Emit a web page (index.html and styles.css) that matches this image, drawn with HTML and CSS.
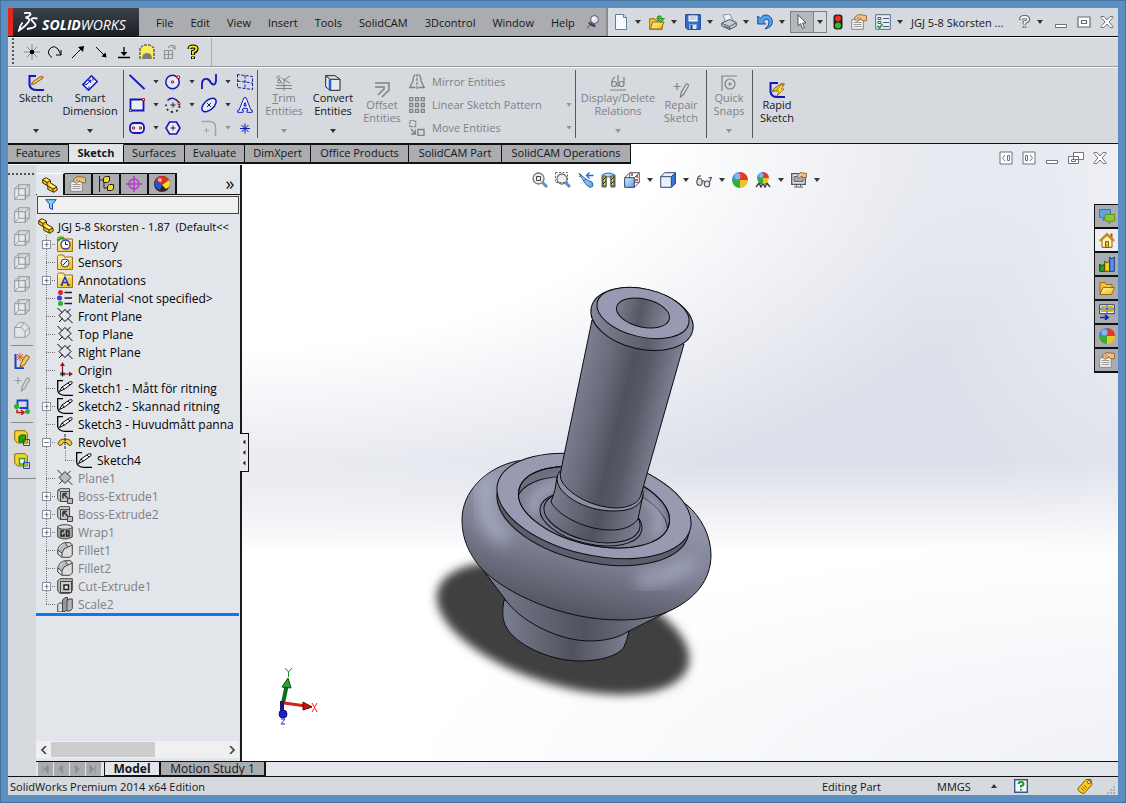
FILE: index.html
```
<!DOCTYPE html>
<html lang="en">
<head>
    <meta charset="UTF-8">
    <meta name="viewport" content="width=device-width, initial-scale=1.0">
    <title>SolidWorks Premium 2014 x64 Edition</title>
    <link rel="stylesheet" href="styles.css">
</head>
<body>
    <!-- Shared icons -->
    <svg class="sprites" aria-hidden="true">
        <linearGradient id="gold" x1="0" y1="0" x2="1" y2="1"><stop offset="0" stop-color="#fff6a0"/><stop offset="1" stop-color="#f0b820"/></linearGradient>
        <linearGradient id="sky" x1="0" y1="0" x2="1" y2="1"><stop offset="0" stop-color="#d8ecff"/><stop offset="1" stop-color="#5f9fe0"/></linearGradient>
        <symbol id="i-part" viewBox="0 0 16 16"><path d="M.7 2.500 4 .7l4.500 2.500V6l6 3.500.8 3.500-3.500 2.300-6-3V9L.7 6z" fill="#f7c71c" stroke="#3d2f00"/><path d="M1 3 5 5.500v3l6 3.500v3M5 5.500l3.500-2M11 12l4-2" fill="none" stroke="#3d2f00"/><path d="m2.500 2.800 2-1.200 2.500 1.600-2 1.200zM6.500 8l2-1 4.500 2.700-2 1.200z" fill="#fff08a"/></symbol>
        <symbol id="i-folder" viewBox="0 0 16 16"><path d="M.5 15.500v-13l1-1.500h5l1 2h8v12.500z" fill="url(#gold)" stroke="#a8700c"/><path d="M1.500 4.500h13" stroke="#fffbd0"/></symbol>
        <symbol id="i-plane" viewBox="0 0 16 16"><path d="M8 1.500 14 7.500 8 13.500 2 7.500zM.5 0 5 4.500M11 10.500l4.500 4.500M13.500 1 10 4.500M5.500 10.500 2 14" fill="none" stroke="currentColor"/></symbol>
        <symbol id="i-sketch" viewBox="0 0 16 16"><path d="M6 .7H.7v9.800Q1.500 15 8 15.300h8" fill="none" stroke="#000" stroke-width="1.300"/><path d="M2.500 11.500 5 7l7.500-5q3.500-1 2.500 1.500L7.500 9zM5 7l2.500 2M11 3l2 2" fill="#fff" stroke="#000"/></symbol>
        <symbol id="i-extrude" viewBox="0 0 16 16"><path d="M.7 2.500 3 .7h9.500v10L10 13.500H3L.7 11z" fill="#d2d2d2" stroke="#444"/><path d="M3.500 3.500h9v10h-9zM3.500 3.500l-2.500-2" fill="#c0c0c0" stroke="#444"/><path d="m6 5.500 5 5m-5-5h4M6 5.500v5" fill="none" stroke="#333" stroke-width="1.500"/><path d="M10.500 10.500h5v5h-5z" fill="#bbb" stroke="#444"/></symbol>
        <symbol id="i-fillet" viewBox="0 0 16 16"><path d="M.7 8Q2 2 8 .7h5l2.300 2V13L13 15.300H5L.7 12z" fill="#ddd" stroke="#444"/><path d="M.7 8 5 11Q6 6 11 5L8 .7M5 11v4.300M11 5l4.300-2" fill="#bbb" stroke="#444"/></symbol>
        <symbol id="i-cube" viewBox="0 0 16 16"><path d="M.7 4.700h10.600v10.600H.7z" fill="#e6e8eb"/><path d="M.7 4.700h10.600v10.600H.7zM4.700.7h10.600v10.600L11.300 15.300V4.700L15.300.7M.7 4.700l4-4v10.600h10.600M4.700 11.300l-4 4" fill="none" stroke="#96999e"/></symbol>
        <symbol id="i-ball" viewBox="0 0 16 16"><path d="M8 8V0a8 8 0 0 1 8 8z" fill="#e03a2e"/><path d="M8 8h8a8 8 0 0 1-8 8z" fill="#ecc52a"/><path d="M8 8v8a8 8 0 0 1-8-8z" fill="#35ad3c"/><path d="M8 8H0a8 8 0 0 1 8-8z" fill="#3f86dc"/><circle cx="5.500" cy="4.500" r="3" fill="#fff" opacity=".4"/></symbol>
        <symbol id="i-hand" viewBox="0 0 16 16"><path d="M.7 5.700h11.600v9.600H.7z" fill="#f3f3f3" stroke="#888"/><path d="M2.500 8.500h8M2.500 10.500h8M2.500 12.500h8" stroke="#999"/><path d="M3 4 7 .8h4l4.500 1v5H12L9.500 5 6 7.500 4.500 6z" fill="#ecc086" stroke="#8a5a22" stroke-width=".8"/><path d="m6 5 2-2m0 3 2-2" stroke="#8a5a22" stroke-width=".7"/></symbol>
        <symbol id="i-min" viewBox="0 0 14 14"><path d="M1.500 9.500h11v3h-11z" fill="#fff" stroke="#70737b"/></symbol>
        <symbol id="i-x" viewBox="0 0 14 14"><path d="M1 1.500h3l3 3.500 3-3.500h3v1L9 7l4 4.500v1h-3L7 9l-3 3.500H1v-1L5 7 1 2.500z" fill="#fff" stroke="#70737b"/></symbol>
        <symbol id="i-pencil" viewBox="0 0 16 16"><path d="M3.500 9.500 4.500 7l8-5.500q3-.8 2.500 1.500L7 8.700z" fill="#f6c64c" stroke="#6b3f08" stroke-width=".8"/><path d="m12 2 2.500 1.700L16 2.500 14.500.6z" fill="#e06a70"/></symbol>
    </svg>

    <div class="app">
        <header class="titlebar">
            <div class="brand">
                <div class="logo">
                    <svg width="22" height="20" viewBox="0 0 22 20" fill="none" stroke="#fff" stroke-width="1.800" aria-hidden="true"><path d="M7 1.200Q14 0 13.500 2.500 12 5 8.500 5.500q5 .8 3.500 3.500-3 5-10 9.500 1-5 3.500-8M20.500 6.500q-7-1-6 1.500l3.500 4q2 3.500-5.500 4.500l-2.500.5" /></svg>
                    <span class="wordmark"><b>SOLID</b>WORKS</span>
                </div>
                <nav class="menu">
                    <a href="#">File</a><a href="#">Edit</a><a href="#">View</a><a href="#">Insert</a><a href="#">Tools</a><a href="#">SolidCAM</a><a href="#">3Dcontrol</a><a href="#">Window</a><a href="#">Help</a>
                </nav>
                <button class="icon-btn" aria-label="Pin menu"><svg width="14" height="14" viewBox="0 0 14 14"><path d="M1 13.500 5.500 8" stroke="#555"/><path d="M2.500 7.500q4 4.500 7 3.500M5 6q0 3.500 4 4" fill="none" stroke="#445" stroke-width="1.500"/><circle cx="8.500" cy="4.500" r="4" fill="#dde" stroke="#556"/><circle cx="7.500" cy="3.500" r="1.500" fill="#fff"/></svg></button>
            </div>
            <div class="quick">
                <button class="icon-btn" aria-label="New"><svg class="i16" viewBox="0 0 16 16"><path d="M2.500.5h8l3 3v12h-11z" fill="#f4faff" stroke="#5f7f9f"/><path d="M10.500.5v3h3" fill="#cfe0f2" stroke="#5f7f9f"/></svg></button><i class="drop"></i>
                <button class="icon-btn" aria-label="Open"><svg class="i16" viewBox="0 0 16 16"><path d="M.7 15.300V4.700h5l1.500 2h6v8.600z" fill="#f3c13e" stroke="#a06a10"/><path d="m1 15 3-7h11l-3 7z" fill="url(#gold)" stroke="#a06a10"/><path d="M8 3q4-3 5 1.500h2.500l-4 4-4-4H10Q10 3 8 3z" fill="#43c43e" stroke="#177a14" stroke-width=".7"/></svg></button><i class="drop"></i>
                <button class="icon-btn" aria-label="Save"><svg class="i16" viewBox="0 0 16 16"><path d="M.7.7h14.600v14.600H2.500L.7 13.500z" fill="#2f6fd0" stroke="#123a80"/><path d="M3.500 1.500h9v6h-9z" fill="#fff"/><path d="M4.500 3h7M4.500 5h7" stroke="#9ab"/><path d="M4.500 10.500h7V15h-7z" fill="#dde6f4"/><path d="M5.500 11h2v4h-2z" fill="#123a80"/></svg></button><i class="drop"></i>
                <button class="icon-btn" aria-label="Print"><svg class="i16" viewBox="0 0 16 16"><path d="m2 1 7-1 3 7-7 2z" fill="#e8f2ff" stroke="#7c92ac"/><path d="m.7 9 8-3.500 6.600 3v3.500l-7 3.500-7.600-3.500z" fill="#c8ccd4" stroke="#555b68"/><path d="m1 9.500 7.500 3L15 9M3 12l7 3M8.500 12.500v3" fill="none" stroke="#555b68"/></svg></button><i class="drop"></i>
                <button class="icon-btn" aria-label="Undo"><svg class="i16" viewBox="0 0 16 16"><path d="M.7 2v8h8L6 7.500Q10 3.500 12 7q1 4-4 8 8-2 7.300-8Q14 .5 7.500 1 5 1.500 3.500 4.500z" fill="#4fa1ea" stroke="#12509c"/></svg></button><i class="drop"></i>
                <span class="select-tool"><button class="icon-btn pressed" aria-label="Select"><svg class="i16" viewBox="0 0 16 16"><path d="M4 .8v11l2.500-2.300 2 5 2-.9-2-4.600H12z" fill="#fff" stroke="#555"/></svg></button><button class="icon-btn arrow" aria-label="Select options"><span class="drop"></span></button></span>
                <button class="icon-btn" aria-label="Rebuild"><svg width="10" height="16" viewBox="0 0 10 16"><rect x=".5" y=".5" width="9" height="15" rx="3" fill="#222"/><circle cx="5" cy="4.500" r="3" fill="#ec2f24"/><circle cx="5" cy="11.500" r="3" fill="#2bc32b"/></svg></button>
                <button class="icon-btn" aria-label="File properties"><svg class="i16"><use href="#i-hand"/></svg></button>
                <button class="icon-btn" aria-label="Options"><svg class="i16" viewBox="0 0 16 16"><path d="M.7.7h14.600v14.600H.7z" fill="#e4eff8" stroke="#4c6f8f"/><path d="M3 3.500h3v2H3zM3 7.500h3v2H3z" fill="#fff" stroke="#557"/><path d="M8 4.500h6M8 8.500h6M8 12.500h6" stroke="#557"/><path d="m2.500 12 2 2 3-4" fill="none" stroke="#1fa71f" stroke-width="1.800"/></svg></button><i class="drop"></i>
                <span class="doc-name">JGJ 5-8 Skorsten ...</span>
                <button class="icon-btn" aria-label="Help"><svg width="12" height="14" viewBox="0 0 12 14" fill="none"><path d="M2 5Q1.500 1.700 5.500 1.700T9.500 4.500Q9 6.500 5.500 7v2.500M5.500 11v2" stroke="#666a72" stroke-width="3.600"/><path d="M2 4.500Q2 1.900 5.500 1.900T9.300 4.500Q9 6.500 5.500 7v2M5.500 11.400v1.200" stroke="#fff" stroke-width="1.600"/></svg></button><i class="drop"></i>
                <span class="window-buttons">
                    <button class="icon-btn" aria-label="Minimize"><svg class="i14"><use href="#i-min"/></svg></button>
                    <button class="icon-btn" aria-label="Maximize"><svg class="i14" viewBox="0 0 14 14"><path d="M1 2h12v10H1z" fill="#fff" stroke="#666a72" stroke-width="1.200"/><path d="M4.500 5.500h5v3h-5z" fill="#fff" stroke="#666a72" stroke-width="1.200"/></svg></button>
                    <button class="icon-btn" aria-label="Close"><svg class="i14"><use href="#i-x"/></svg></button>
                </span>
            </div>
        </header>

        <div class="toolstrip">
            <div class="tools">
                <button class="icon-btn" aria-label="Point"><svg class="i16" viewBox="0 0 16 16"><path d="M8 0v16M0 8h16M3 3l10 10M13 3 3 13" stroke="#777" stroke-width=".8"/><circle cx="8" cy="8" r="2.200"/></svg></button>
                <button class="icon-btn" aria-label="Rotate"><svg class="i16" viewBox="0 0 16 16" fill="none" stroke="#000"><path d="M5 13.500Q0 10 2 6q4-6 9-1l3 6M9 11h5V6"/></svg></button>
                <button class="icon-btn" aria-label="Arrow up"><svg class="i16" viewBox="0 0 16 16"><path d="M2 14 12 4" stroke="#000"/><path d="m8 3 6-1-1 6z"/></svg></button>
                <button class="icon-btn" aria-label="Arrow down"><svg class="i16" viewBox="0 0 16 16"><path d="m3 3 8 8" stroke="#000"/><path d="m13.500 13.500-5-1 4-4z"/></svg></button>
                <button class="icon-btn" aria-label="Normal"><svg class="i16" viewBox="0 0 16 16"><path d="M2 13.500h12M8 3v8" stroke="#000" stroke-width="1.300"/><path d="M4.500 8h7L8 12z"/></svg></button>
                <button class="icon-btn" aria-label="Fixture"><svg class="i16" viewBox="0 0 16 16"><path d="M1 15V4l4-3h6l4 3v11" fill="#f8ef58" stroke="#222" stroke-dasharray="3 1"/><path d="M3 15q0-6 5-6t5 6z" fill="#7c7c7c"/></svg></button>
                <button class="icon-btn" aria-label="Assembly"><svg class="i16" viewBox="0 0 16 16" fill="none" stroke="#909398" stroke-width="1.200"><path d="M2.500 6.500h4v4h-4zM6.500 6.500h4v4h-4zM2.500 10.500h4v4h-4zM6.500 10.500h4v4h-4zM6 4q2-4 7-2v3l-3-2"/></svg></button>
                <button class="icon-btn" aria-label="What's this"><svg class="i16" viewBox="0 0 16 16" fill="none"><path d="M4.500 5Q4.500 2.500 8 2.500T11.500 5Q11 7.500 8 8v3M8 12.500v2.500" stroke="#000" stroke-width="4"/><path d="M4.500 4.800Q4.500 2.600 8 2.600T11.500 5Q11 7 8 8v2.500M8 13v1.500" stroke="#f5e614" stroke-width="2"/></svg></button>
            </div>
        </div>

        <div class="ribbon">
            <button class="tool w48"><svg class="i16" viewBox="0 0 16 16"><path d="M8 1H1.500v9Q2.500 15 9 15h7" fill="none" stroke="#1118b8" stroke-width="2"/><use href="#i-pencil"/></svg><span>Sketch</span><i class="drop"></i></button>
            <button class="tool w60"><svg class="i16" viewBox="0 0 16 16"><path d="m.8 9.500 8.700-8.700 5.700 5.700-8.700 8.700z" fill="#eef" stroke="#1118b8" stroke-width="1.500"/><path d="m4 10 5-5m0 0-3 .5M9 5l-.5 3M11 2.500v3m-9 3.500 3 .5m2 5v-3" fill="none" stroke="#1118b8"/></svg><span>Smart<br>Dimension</span><i class="drop"></i></button>
            <div class="entity-grid">
                <button aria-label="Line"><svg class="i16" viewBox="0 0 16 16"><path d="m.5 1 15 14" stroke="#1118b8" stroke-width="1.800"/></svg></button><i class="drop"></i>
                <button aria-label="Circle"><svg class="i16" viewBox="0 0 16 16"><circle cx="7.500" cy="8" r="6.700" fill="#e6e9f6" stroke="#1118b8" stroke-width="1.500"/><path d="M6.500 7h2v2h-2zM12 2h2.500v2.500H12z" fill="#fff" stroke="#b01818"/></svg></button><i class="drop"></i>
                <button aria-label="Spline"><svg class="i16" viewBox="0 0 16 16"><path d="M1 15V9q1-5 5-4 2 0 4 4 4 4 5-2V0" fill="none" stroke="#1118b8" stroke-width="1.800"/></svg></button><i class="drop"></i>
                <button aria-label="Sketch plane"><svg class="i16" viewBox="0 0 16 16"><path d="M.5.5v13l15 2v-13zM.5 7l15 2M8 1.500v13" fill="none" stroke="#1118b8" stroke-dasharray="3 1.500"/></svg></button>
                <button aria-label="Rectangle"><svg class="i16" viewBox="0 0 16 16"><path d="M1.500 2.500h13v11h-13z" fill="#eceff8" stroke="#1118b8" stroke-width="1.800"/><path d="M.5 12.500h2v2h-2zM13.500 1.500h2v2h-2z" fill="#fff" stroke="#b01818"/></svg></button><i class="drop"></i>
                <button aria-label="Arc"><svg class="i16" viewBox="0 0 16 16"><path d="M2.500 3.500Q8-2 14.500 6" fill="none" stroke="#1118b8" stroke-width="1.500"/><path d="M14.500 8.500q-.5 6-6.500 6.500-6.500 0-7-7.500" fill="none" stroke="#223" stroke-width="1.800" stroke-dasharray="2 3"/><path d="M8 5.500v5M5.500 8h5" stroke="#223"/><path d="M13 5.500h2v2h-2z" fill="#fff" stroke="#b01818"/></svg></button><i class="drop"></i>
                <button aria-label="Ellipse"><svg class="i16" viewBox="0 0 16 16"><ellipse cx="8" cy="8" rx="8.500" ry="4.800" transform="rotate(-42 8 8)" fill="#e6e9f6" stroke="#1118b8" stroke-width="1.500"/><path d="m6 6 4 4m0-4-4 4" stroke="#223"/></svg></button><i class="drop"></i>
                <button aria-label="Text"><svg class="i16" viewBox="0 0 16 16"><path d="m7 .7h2l5 12.600h1.300v2H10v-2h1l-.8-2H6l-.8 2h1v2H.7v-2H2zM6.800 9h2.600L8 5.500z" fill="#f4f5fc" stroke="#1118b8"/></svg></button>
                <button aria-label="Slot"><svg class="i16" viewBox="0 0 16 16"><rect x="1" y="3" width="14" height="10" rx="4" fill="#eceff8" stroke="#1118b8" stroke-width="1.800"/><path d="M3.500 7h2v2h-2zM10.500 7h2v2h-2z" fill="#fff" stroke="#b01818"/></svg></button><i class="drop"></i>
                <button aria-label="Polygon"><svg class="i16" viewBox="0 0 16 16"><path d="M4.500 2h7L15 8l-3.500 6h-7L1 8z" fill="#eceff8" stroke="#1118b8" stroke-width="1.600"/><path d="M8 5.500v5M5.500 8h5" stroke="#223"/></svg></button><span></span>
                <button aria-label="Fillet"><svg class="i16" viewBox="0 0 16 16"><path d="M.5 1.500H9q5.500.5 5.500 6V16" fill="none" stroke="#a0a3a8" stroke-width="1.500"/><path d="M5.500 8v5M3 10.500h5" stroke="#a0a3a8"/></svg></button><i class="drop off"></i>
                <button aria-label="Point"><svg class="i16" viewBox="0 0 16 16"><path d="M8 3.500v10M3 8.500h10M4.500 5l7 7m0-7-7 7" stroke="#1118b8"/></svg></button>
            </div>
            <div class="group">
                <button class="tool w48" disabled><svg class="i16" viewBox="0 0 16 16" fill="none" stroke="currentColor"><path d="M0 10.500h16M0 13.500h16M8 4v12M6 9 3 4M8 5l6-4M8 5l6 3M6 3l3 2"/><circle cx="2.500" cy="2.500" r="1.500"/><circle cx="3" cy="6.500" r="1.500"/></svg><span><u>T</u>rim<br>Entities</span><i class="drop"></i></button>
                <button class="tool w48"><svg class="i16" viewBox="0 0 16 16"><path d="M.7.700H10l5 3.600v11H5l-4.300-3.500zM.7.700 5 4.300h10" fill="#e6e9ee" stroke="#222"/><path d="M5 4.300v11" stroke="#1f62d8" stroke-width="2.500"/></svg><span>Convert<br>Entities</span><i class="drop"></i></button>
                <button class="tool low w48" disabled><svg class="i16" viewBox="0 0 16 16" fill="none" stroke="currentColor" stroke-width="1.500"><path d="M1 1h14v7l-7 7M1 5h9v2l-6 6"/></svg><span>Offset<br>Entities</span></button>
                <div class="stack">
                    <button class="line" disabled><svg class="i16" viewBox="0 0 16 16" fill="none" stroke="currentColor" stroke-width="1.300"><path d="M8 0v16" stroke-dasharray="3 1"/><path d="M6.500.7Q4 2 4 7L.7 13.500h5.800M9.500.7Q12 2 12 7l3.300 6.500H9.500"/></svg><span>Mirror Entities</span></button>
                    <button class="line" disabled><svg class="i16" viewBox="0 0 16 16" fill="none" stroke="currentColor" stroke-width="1.300"><path d="M.7.7h3v3h-3zM6.500.7h3v3h-3zM12.300.7h3v3h-3zM.7 6.500h3v3h-3zM6.500 6.500h3v3h-3zM12.300 6.500h3v3h-3zM.7 12.300h3v3h-3zM6.500 12.300h3v3h-3zM12.300 12.300h3v3h-3z"/></svg><span>Linear Sketch Pattern</span><i class="drop"></i></button>
                    <button class="line" disabled><svg class="i16" viewBox="0 0 16 16" fill="none" stroke="currentColor" stroke-width="1.300"><path d="M.7.7h6v6h-6z" stroke-dasharray="2 1"/><path d="M9 9.500h6v6H9zM2 9l4 4.500M2 14h4.500V9.500"/></svg><span>Move Entities</span><i class="drop"></i></button>
                </div>
            </div>
            <div class="group">
                <button class="tool w80" disabled><svg class="i16" viewBox="0 0 16 16" fill="none" stroke="currentColor" stroke-width="1.200"><circle cx="4" cy="9" r="2.500"/><circle cx="11.500" cy="9" r="2.500"/><path d="M1.500 9Q2 4 5 2M14 8V2M8 0v12M0 15h16"/></svg><span>Display/Delete<br>Relations</span><i class="drop"></i></button>
                <button class="tool low w44" disabled><svg class="i16" viewBox="0 0 16 16" fill="none" stroke="currentColor" stroke-width="1.200"><path d="M4 1v7M.5 4.500h7M7.500 15l.5-4 5-9q2.500-.5 2.500 2l-5 8.500z"/></svg><span>Repair<br>Sketch</span></button>
            </div>
            <div class="group">
                <button class="tool w40" disabled><svg class="i16" viewBox="0 0 16 16" fill="none" stroke="currentColor" stroke-width="1.200"><path d="M1 16V1h15"/><circle cx="9" cy="9" r="5"/><circle cx="9" cy="9" r="1"/></svg><span>Quick<br>Snaps</span><i class="drop"></i></button>
            </div>
            <div class="group">
                <button class="tool low w44"><svg class="i16" viewBox="0 0 16 16"><path d="M9 1H1.500v9Q2.500 15 8 15h8" fill="none" stroke="#1118b8" stroke-width="2"/><use href="#i-pencil"/><path d="M12 3 7 9h3l-2 5 7-7h-3l3-4z" fill="#ffe02e" stroke="#8a5a00" stroke-width=".7"/></svg><span>Rapid<br>Sketch</span></button>
            </div>
        </div>

        <div class="workspace">
            <div class="tab-row">
                <div class="command-tabs" role="tablist">
                    <button role="tab">Features</button><button role="tab" class="active">Sketch</button><button role="tab">Surfaces</button><button role="tab">Evaluate</button><button role="tab">DimXpert</button><button role="tab">Office Products</button><button role="tab">SolidCAM Part</button><button role="tab">SolidCAM Operations</button>
                </div>
                <div class="doc-buttons">
                    <button class="icon-btn" aria-label="Collapse left"><svg class="i14" viewBox="0 0 14 14"><path d="M1 1h12v12H1z" fill="#fff" stroke="#70737b"/><path d="M6 4 3.500 7 6 10M8.500 4.500h2v5h-2z" fill="none" stroke="#70737b"/></svg></button>
                    <button class="icon-btn" aria-label="Collapse right"><svg class="i14" viewBox="0 0 14 14"><path d="M1 1h12v12H1z" fill="#fff" stroke="#70737b"/><path d="m8 4 2.500 3L8 10M3.500 4.500h2v5h-2z" fill="none" stroke="#70737b"/></svg></button>
                    <button class="icon-btn" aria-label="Minimize document"><svg class="i14"><use href="#i-min"/></svg></button>
                    <button class="icon-btn" aria-label="Restore document"><svg width="16" height="14" viewBox="0 0 16 14"><path d="M5.500 1.500h10v7h-10zM.5 5.500h10v7H.5zM3.500 8.500h4v2h-4z" fill="#fff" stroke="#70737b"/></svg></button>
                    <button class="icon-btn" aria-label="Close document"><svg class="i14"><use href="#i-x"/></svg></button>
                </div>
            </div>

            <div class="work-body">
                <aside class="view-bar">
                    <button class="icon-btn" aria-label="Front"><svg class="i16"><use href="#i-cube"/></svg></button>
                    <button class="icon-btn" aria-label="Back"><svg class="i16"><use href="#i-cube"/></svg></button>
                    <button class="icon-btn" aria-label="Left"><svg class="i16"><use href="#i-cube"/></svg></button>
                    <button class="icon-btn" aria-label="Right"><svg class="i16"><use href="#i-cube"/></svg></button>
                    <button class="icon-btn" aria-label="Top"><svg class="i16"><use href="#i-cube"/></svg></button>
                    <button class="icon-btn" aria-label="Bottom"><svg class="i16"><use href="#i-cube"/></svg></button>
                    <button class="icon-btn" aria-label="Isometric"><svg class="i16" viewBox="0 0 16 16" fill="#e2e4e8" stroke="#96999e"><path d="M.7 5.500 5 .7h5l5.300 5v6l-4 3.600H.7zM.7 5.500H7l4 4v5.800M7 5.500l3-4.800m1 8.800 4.300-3.800"/></svg></button>
                    <hr>
                    <button class="icon-btn" aria-label="New sketch"><svg class="i16" viewBox="0 0 16 16"><path d="M1.500 1v14.300H10" fill="none" stroke="#1540c8" stroke-width="2"/><path d="M6 0v8M2 4h8M3 1l6 6m0-6L3 7" stroke="#e8581c"/><path d="m6 14 1-4 5-8 3.500 2-5 8z" fill="#f6c64c" stroke="#6b3f08" stroke-width=".8"/></svg></button>
                    <button class="icon-btn" aria-label="Edit sketch"><svg class="i16" viewBox="0 0 16 16" fill="none" stroke="#9a9da3" stroke-width="1.200"><path d="M4 1v7M.5 4.500h7M7.500 15l.5-4 5-9q2.500-.5 2.500 2l-5 8.500z"/></svg></button>
                    <button class="icon-btn" aria-label="Relations"><svg class="i16" viewBox="0 0 16 16"><path d="M3.500 7V1.500h10V9h-8" fill="none" stroke="#1540c8" stroke-width="1.800"/><circle cx="2.500" cy="7.500" r="2.500" fill="#28b428"/><circle cx="13.500" cy="12.500" r="2.500" fill="#28b428"/><path d="M3 10.500v3h6M7 11l3 2.500L7 16" fill="none" stroke="#c01818" stroke-width="1.500"/></svg></button>
                    <hr>
                    <button class="icon-btn" aria-label="Extrude boss"><svg class="i16" viewBox="0 0 16 16"><path d="M.7 1 3 .7h8L13.300 3v10H3.500L.7 10z" fill="#f6d332" stroke="#8a6a00"/><path d="M5 6.500 7 5h4.500v5L10 12H5z" fill="#28a428" stroke="#085a08"/><path d="M9.500 9.500h6v6h-6z" fill="none" stroke="#2448c0"/></svg></button>
                    <button class="icon-btn" aria-label="Extrude cut"><svg class="i16" viewBox="0 0 16 16"><path d="M.7 1 3 .7h8L13.300 3v10H3.500L.7 10z" fill="#f6d332" stroke="#8a6a00"/><path d="M5.500 5.500h5v5.500h-5z" fill="#fff" stroke="#28a428" stroke-width="1.500"/><path d="M9.500 9.500h6v6h-6z" fill="none" stroke="#2448c0"/></svg></button>
                    <hr class="full">
                </aside>

                <div class="document">
                    <div class="upper">
                        <aside class="feature-panel">
                            <div class="panel-tabs">
                                <button class="active" aria-label="Feature tree"><svg class="i16"><use href="#i-part"/></svg></button>
                                <button aria-label="Properties"><svg class="i16"><use href="#i-hand"/></svg></button>
                                <button aria-label="Configurations"><svg class="i16" viewBox="0 0 16 16"><path d="M1.500 0v16M1.500 4H6M6 4v8h3" fill="none" stroke="#222"/><path d="m5.500 2 2-1.500h4V5L9.500 6.500h-4zM9.500 10l2-1.500h4V13l-2 1.500h-4z" fill="#f7d52e" stroke="#222"/></svg></button>
                                <button aria-label="Dimensions"><svg class="i16" viewBox="0 0 16 16" fill="none" stroke="#b838d0" stroke-width="1.500"><circle cx="8" cy="8" r="5"/><path d="M8 0v16M0 8h16"/></svg></button>
                                <button aria-label="Display manager"><svg class="i16" viewBox="0 0 16 16"><circle cx="8" cy="8" r="8" fill="#282828"/><path d="M8 0a8 8 0 0 1 7 4L8 9 1.500 4Q4 0 8 0z" fill="#e22e22"/><path d="m8 9 7-5q2 4 0 7l-3 2z" fill="#f0dc30"/><path d="M1.500 4 8 9l-2 5Q-1 11 1.500 4z" fill="#2c50d8"/><circle cx="6" cy="4" r="2" fill="#fff" opacity=".6"/></svg></button>
                                <button class="more" aria-label="More">»</button>
                            </div>
                            <label class="filter"><svg width="12" height="12" viewBox="0 0 12 12"><path d="M.7.7h10.600L7.500 5v5.500L4.500 9V5z" fill="#7fd0f8" stroke="#1548b8"/></svg><input type="text" aria-label="Filter"></label>

                            <div class="tree">
                                <div class="node root"><svg class="i16"><use href="#i-part"/></svg><span>JGJ 5-8 Skorsten - 1.87&nbsp; (Default&lt;&lt;</span></div>
                                <ul>
                                    <li class="node"><span class="twig"><button aria-label="Expand">+</button></span><svg class="i16" viewBox="0 0 16 16"><use href="#i-folder"/><circle cx="8.500" cy="8.500" r="4.500" fill="#fff" stroke="#2442a0" stroke-width="1.300"/><path d="M8.500 5.500v3H11" fill="none" stroke="#222"/><path d="M1 5Q3 1 7 3" fill="none" stroke="#1ea01e" stroke-width="2"/></svg><span>History</span></li>
                                    <li class="node"><span class="twig"></span><svg class="i16" viewBox="0 0 16 16"><use href="#i-folder"/><circle cx="8" cy="9" r="4" fill="#eef" stroke="#444"/><path d="m6 11 4-4" stroke="#222"/></svg><span>Sensors</span></li>
                                    <li class="node"><span class="twig"><button aria-label="Expand">+</button></span><svg class="i16" viewBox="0 0 16 16"><use href="#i-folder"/><path d="M4.500 13 8 5l3.500 8M5.500 10.500h5M3.500 13h2.500M10 13h3" fill="none" stroke="#1c38b8" stroke-width="1.500"/></svg><span>Annotations</span></li>
                                    <li class="node"><span class="twig"></span><svg class="i16" viewBox="0 0 16 16"><circle cx="3.500" cy="2.500" r="2.500" fill="#e02424"/><circle cx="2.500" cy="8" r="2.500" fill="#2c40e0"/><circle cx="3.500" cy="13.500" r="2.500" fill="#20b828"/><path d="M7.500 2.500H15M7.500 8H15M7.500 13.500H15" stroke="#222" stroke-width="1.500"/></svg><span>Material &lt;not specified&gt;</span></li>
                                    <li class="node"><span class="twig"></span><svg class="i16"><use href="#i-plane"/></svg><span>Front Plane</span></li>
                                    <li class="node"><span class="twig"></span><svg class="i16"><use href="#i-plane"/></svg><span>Top Plane</span></li>
                                    <li class="node"><span class="twig"></span><svg class="i16"><use href="#i-plane"/></svg><span>Right Plane</span></li>
                                    <li class="node"><span class="twig"></span><svg class="i16" viewBox="0 0 16 16"><path d="M5.500 12V3M7 12h6" stroke="#a01010" stroke-width="1.200"/><path d="M5.500 0 8 4H3zM16 12l-4-2.500v5z" fill="#a01010"/><path d="M5.500 9.500v5M3 12h5M4 10.500l3 3m0-3-3 3" stroke="#000"/></svg><span>Origin</span></li>
                                    <li class="node"><span class="twig"></span><svg class="i16"><use href="#i-sketch"/></svg><span>Sketch1 - Mått för ritning</span></li>
                                    <li class="node"><span class="twig"><button aria-label="Expand">+</button></span><svg class="i16"><use href="#i-sketch"/></svg><span>Sketch2 - Skannad ritning</span></li>
                                    <li class="node"><span class="twig"></span><svg class="i16"><use href="#i-sketch"/></svg><span>Sketch3 - Huvudmått panna</span></li>
                                    <li class="node"><span class="twig"><button aria-label="Collapse">−</button></span><svg class="i16" viewBox="0 0 16 16"><path d="M1 9.500Q2 5 8 5t7 4.500q-1 3-3.500 1.500Q10 8 8 8T4.500 11Q2 12.500 1 9.500z" fill="#f6c92a" stroke="#5a4200"/><path d="M8 0v16" stroke="#222" stroke-dasharray="3 1"/></svg><span>Revolve1</span></li>
                                    <li class="node"><span class="twig pass"></span><span class="twig end"></span><svg class="i16"><use href="#i-sketch"/></svg><span>Sketch4</span></li>
                                    <li class="node off"><span class="twig"></span><svg class="i16 dark"><path d="m8 1.500 6 6-6 6-6-6z" fill="#bbb"/><use href="#i-plane"/></svg><span>Plane1</span></li>
                                    <li class="node off"><span class="twig"><button aria-label="Expand">+</button></span><svg class="i16"><use href="#i-extrude"/></svg><span>Boss-Extrude1</span></li>
                                    <li class="node off"><span class="twig"><button aria-label="Expand">+</button></span><svg class="i16"><use href="#i-extrude"/></svg><span>Boss-Extrude2</span></li>
                                    <li class="node off"><span class="twig"><button aria-label="Expand">+</button></span><svg class="i16" viewBox="0 0 16 16"><path d="M.7 3v10q7 4 14.600 0V3" fill="#aaa" stroke="#444"/><ellipse cx="8" cy="3" rx="7.300" ry="2.300" fill="#ddd" stroke="#444"/><path d="M7 7H4v5h3V9.500M9.500 7H12v5H9.500z" fill="none" stroke="#222" stroke-width="1.400"/></svg><span>Wrap1</span></li>
                                    <li class="node off"><span class="twig"></span><svg class="i16"><use href="#i-fillet"/></svg><span>Fillet1</span></li>
                                    <li class="node off"><span class="twig"></span><svg class="i16"><use href="#i-fillet"/></svg><span>Fillet2</span></li>
                                    <li class="node off"><span class="twig"><button aria-label="Expand">+</button></span><svg class="i16" viewBox="0 0 16 16"><path d="M.7 3 3 .7h12.300v12L13 15.300H3L.7 13z" fill="#bbb" stroke="#444"/><path d="M3.500 3.500h11v11h-11z" fill="#ccc" stroke="#444"/><path d="M7 7h4.500v4.500H7z" fill="#eee" stroke="#222" stroke-width="1.500"/></svg><span>Cut-Extrude1</span></li>
                                    <li class="node off"><span class="twig end"></span><svg class="i16" viewBox="0 0 16 16"><path d="M.7 8.500 2.500 7H6v7.500L4.500 16H.7z" fill="#ddd" stroke="#444"/><path d="M5.500 4 8 1.500h2.500v12L8 15.500H5.500z" fill="#999" stroke="#444"/><path d="M10 5.500 12 3h3.300v9.500L13 15h-3z" fill="#b5b5b5" stroke="#444"/></svg><span>Scale2</span></li>
                                </ul>
                                <div class="rollback"></div>
                            </div>

                            <div class="scrollbar">
                                <button aria-label="Scroll left"><svg width="8" height="8" viewBox="0 0 8 8"><path d="M6 0 2 4l4 4" fill="none" stroke="#444" stroke-width="1.700"/></svg></button>
                                <div class="track"><div class="thumb"></div></div>
                                <button aria-label="Scroll right"><svg width="8" height="8" viewBox="0 0 8 8"><path d="m2 0 4 4-4 4" fill="none" stroke="#444" stroke-width="1.700"/></svg></button>
                            </div>
                        </aside>

                        <main class="viewport">
                            <svg class="model" viewBox="242 165 876 596" role="img" aria-label="JGJ 5-8 Skorsten">
                                <defs>
                                    <filter id="soft" x="-20%" y="-20%" width="140%" height="140%"><feGaussianBlur stdDeviation="5"/></filter>
                                    <filter id="haze" x="-50%" y="-50%" width="200%" height="200%"><feGaussianBlur stdDeviation="8"/></filter>
                                    <linearGradient id="tube" gradientUnits="userSpaceOnUse" x1="575" y1="398" x2="664" y2="420"><stop offset="0" stop-color="#7b7e90"/><stop offset=".25" stop-color="#6a6c7c"/><stop offset=".52" stop-color="#50525d"/><stop offset=".68" stop-color="#565864"/><stop offset="1" stop-color="#7d8093"/></linearGradient>
                                    <linearGradient id="collar" gradientUnits="userSpaceOnUse" x1="550" y1="505" x2="640" y2="525"><stop offset="0" stop-color="#7b7e90"/><stop offset=".55" stop-color="#50525d"/><stop offset="1" stop-color="#7d8093"/></linearGradient>
                                    <linearGradient id="bore" x1="0" y1="0" x2="1" y2="0"><stop offset="0" stop-color="#7a7d8f"/><stop offset=".45" stop-color="#565864"/><stop offset="1" stop-color="#858899"/></linearGradient>
                                    <linearGradient id="lip" x1="0" y1="0" x2="1" y2="0"><stop offset="0" stop-color="#85889b"/><stop offset=".6" stop-color="#5b5d6a"/><stop offset="1" stop-color="#9194aa"/></linearGradient>
                                    <linearGradient id="torus" gradientUnits="userSpaceOnUse" x1="595" y1="500" x2="568" y2="618"><stop offset="0" stop-color="#9396ab"/><stop offset=".45" stop-color="#7e8194"/><stop offset="1" stop-color="#50525d"/></linearGradient>
                                    <linearGradient id="foot" x1="0" y1="0" x2="1" y2="0"><stop offset="0" stop-color="#7b7e90"/><stop offset=".55" stop-color="#50525d"/><stop offset="1" stop-color="#7d8093"/></linearGradient>
                                    <clipPath id="torus-clip"><path d="M517 461C485 468 462 492 462 520c0 20 8 36 21 50 22 22 77 50 137 50 20 0 35-3 47-8 28-12 44-32 44-57 0-20-11-39-24-50L600 455z"/></clipPath>
                                    <clipPath id="well"><ellipse cx="594" cy="507" rx="77" ry="38" transform="rotate(13 594 507)"/></clipPath>
                                </defs>
                                <ellipse cx="563" cy="628" rx="131" ry="57" transform="rotate(17 563 628)" fill="#404040" filter="url(#soft)"/>
                                <g stroke="#0c0c10" stroke-linejoin="round">
                                    <path d="M504 600q-4 20 4 30c12 17 44 31 72 31 20 0 38-5 44-14q3-7 5-16z" fill="url(#foot)"/>
                                    <path d="m483 570 25 33c16 20 52 38 82 38 16 0 30-4 37-9l40-20z" fill="url(#foot)"/>
                                    <path d="M517 461C485 468 462 492 462 520c0 20 8 36 21 50 22 22 77 50 137 50 20 0 35-3 47-8 28-12 44-32 44-57 0-20-11-39-24-50L600 455z" fill="url(#torus)"/>
                                </g>
                                <g clip-path="url(#torus-clip)">
                                    <path d="M488 478q-12 42 20 62" fill="none" stroke="#b4b8d0" stroke-width="14" opacity=".8" filter="url(#haze)"/>
                                    <path d="M637 581q36-3 55-20" fill="none" stroke="#b4b8d0" stroke-width="13" opacity=".75" filter="url(#haze)"/>
                                    <path d="M462 510q0 45 35 67" fill="none" stroke="#5f6170" stroke-width="7" opacity=".6" filter="url(#haze)"/>
                                </g>
                                <g stroke="#0c0c10" stroke-linejoin="round">
                                    <ellipse cx="593" cy="513" rx="98" ry="49" transform="rotate(13 593 513)" fill="#5c5e6b"/>
                                    <ellipse cx="594" cy="506" rx="99" ry="49" transform="rotate(13 594 506)" fill="#979ab0"/>
                                    <ellipse cx="594" cy="507" rx="77" ry="38" transform="rotate(13 594 507)" fill="#6c6f80"/>
                                    <g clip-path="url(#well)">
                                        <ellipse cx="592" cy="517" rx="77" ry="38" transform="rotate(13 592 517)" fill="#7f8295"/>
                                        <path d="M535 515q-8-25 30-32M645 492q22 20 10 45" fill="none" stroke="#a4a8bf" stroke-width="12" opacity=".7" filter="url(#soft)"/>
                                        <ellipse cx="591" cy="519" rx="52" ry="25" transform="rotate(13 591 519)" fill="#7a7d90"/>
                                        <ellipse cx="592" cy="517" rx="49" ry="24" transform="rotate(13 592 517)" fill="url(#collar)"/>
                                    </g>
                                    <ellipse cx="594" cy="507" rx="77" ry="38" transform="rotate(13 594 507)" fill="none"/>
                                    <path d="M557 477q-1 13-6 25c8 15 36 28 60 28 12 0 21-3 27-11l5-24z" fill="url(#collar)"/>
                                    <path d="M560 471q-6 8 0 17c10 14 32 23 54 23 18 0 30-6 29-20z" fill="#8c8fa3"/>
                                    <path d="m592 320-31 150q-3 10 6 18c12 12 30 19 48 20 14 0 24-5 26-13l43-151z" fill="url(#tube)"/>
                                    <ellipse cx="642" cy="319" rx="52" ry="30" transform="rotate(13 642 319)" fill="url(#lip)"/>
                                    <ellipse cx="643" cy="313" rx="47" ry="24" transform="rotate(13 643 313)" fill="#979ab0"/>
                                    <ellipse cx="643" cy="313" rx="27" ry="14" transform="rotate(13 643 313)" fill="url(#bore)"/>
                                </g>
                                <!-- Axis triad -->
                                <path d="m283 703 4-19" stroke="#14681c" stroke-width="4"/><path d="m282 687 6-9 3 10z" fill="#28a838" stroke="#0d4a12"/>
                                <path d="m284 703 22 3" stroke="#d02020" stroke-width="3"/><path d="m303 702 9 5-9 3z" fill="#c01818" stroke="#700"/>
                                <path d="M282 701v10" stroke="#181878" stroke-width="4"/><circle cx="283" cy="714" r="4" fill="#2020c8" stroke="#101070"/>
                                <path d="m285 668 3.500 4v5m0-5 3.500-4" fill="none" stroke="#18901c"/><path d="m312 703 5 9m0-9-5 9" stroke="#f02020"/><path d="M281 719h4l-4 5h4" fill="none" stroke="#2020f0"/>
                            </svg>
                            <button class="splitter" aria-label="Collapse panel"><i></i><i></i><i></i></button>
                            <div class="hud">
                                <button class="icon-btn" aria-label="Zoom to fit"><svg class="i16" viewBox="0 0 16 16"><circle cx="6.500" cy="6.500" r="5.500" fill="#eee" stroke="#777" stroke-width="1.300"/><path d="M4.500 4.500h4v4h-4z" fill="none" stroke="#444"/><path d="m10.500 10.500 4.500 4.500" stroke="#5b8fd0" stroke-width="3"/></svg></button>
                                <button class="icon-btn" aria-label="Zoom to area"><svg class="i16" viewBox="0 0 16 16"><circle cx="7" cy="7" r="5" fill="#eee" stroke="#777" stroke-width="1.300"/><path d="M.5.5h12v10H.5z" fill="none" stroke="#666" stroke-dasharray="2 1.500"/><path d="m10.500 10.500 4.500 4.500" stroke="#5b8fd0" stroke-width="3"/></svg></button>
                                <button class="icon-btn" aria-label="Previous view"><svg class="i16" viewBox="0 0 16 16"><path d="M1 1.500 9 8l5 2 1 4-3 1.500-4-3z" fill="url(#sky)" stroke="#1d69a8"/><path d="m1 5 3-2M5 9l4-2" stroke="#1d69a8"/><path d="M15.500 3.500h-7m3-3-3 3 3 3" fill="none" stroke="#1d69d8" stroke-width="1.300"/></svg></button>
                                <button class="icon-btn" aria-label="Section view"><svg class="i16" viewBox="0 0 16 16"><path d="M1 3q6-4 13 0v12h-4V5H5v10H1z" fill="url(#sky)" stroke="#2d62a8"/><path d="M2 4h3v10H2zM10 4h3v10h-3z" fill="#f6d332" stroke="#554400"/><path d="m2 8 3-3m-3 7 3-3m5-1 3-3m-3 7 3-3" stroke="#222"/></svg></button>
                                <button class="icon-btn" aria-label="View orientation"><svg class="i16" viewBox="0 0 16 16"><path d="M.7 5.700h9.600v9.600H.7z" fill="url(#sky)" stroke="#246"/><path d="M.7 5.700l5-5h9.600v9.600l-5 5M10.300 5.700l5-5M5.700.7v5m4.600 4.600h5" fill="none" stroke="#555"/><path d="M8 1v3m3 4h3m-1-5v3" stroke="#e02020" stroke-width="1.500"/></svg></button><i class="drop"></i>
                                <button class="icon-btn" aria-label="Display style"><svg class="i16" viewBox="0 0 16 16"><path d="m.7 4.700 4-4h10.600v10.600l-4 4H.7z" fill="#e6f1fc" stroke="#346"/><path d="M11.300 4.700l4-4v10.600l-4 4z" fill="#3c78d8" stroke="#346"/><path d="M.7 4.700h10.600" stroke="#346"/></svg></button><i class="drop"></i>
                                <button class="icon-btn" aria-label="Hide/Show items"><svg class="i16" viewBox="0 0 16 16" fill="#dce9f6" stroke="#555" stroke-width="1.200"><ellipse cx="3.500" cy="10" rx="2.700" ry="3.500"/><ellipse cx="11" cy="12" rx="2.700" ry="3"/><path d="M1.500 7Q2 3.500 5 4M6 9.500q2-1.500 3 1M13.500 10l2-4.500-3 .5" fill="none"/></svg></button><i class="drop"></i>
                                <button class="icon-btn" aria-label="Edit appearance"><svg class="i16"><use href="#i-ball"/></svg></button>
                                <button class="icon-btn" aria-label="Apply scene"><svg class="i16" viewBox="0 0 16 16"><path d="m1 15 3-4h8l3 4M4 11l2 4 2-4 2 4 2-4" fill="none" stroke="#444" stroke-width="1.500"/><use href="#i-ball" x="2" width="12" height="12"/></svg></button><i class="drop"></i>
                                <button class="icon-btn" aria-label="View settings"><svg class="i16" viewBox="0 0 16 16"><path d="M.7 1.700h13.600v10.600H.7z" fill="#e2e4e8" stroke="#555" stroke-width="1.300"/><path d="M3 4.500h9v5H3z" fill="#aab" stroke="#666"/><path d="M5.500 12.500v2m4-2v2M3 15h9" stroke="#555"/><path d="m6 4 3-3.500 6.500 1v4H12L10.500 4 8 6.500z" fill="#ecc086" stroke="#8a5a22" stroke-width=".8"/></svg></button><i class="drop"></i>
                            </div>
                            <nav class="task-pane">
                                <button aria-label="Forum"><svg class="i16" viewBox="0 0 16 16"><path d="M.5 1.500h11v8H6l-2 3v-3H.5z" fill="#56a8e8" stroke="#2c78bc"/><path d="M6 6.500h9.500V13H12l-2 2.500V13H6z" fill="#90c82c" stroke="#5f921a"/></svg></button>
                                <button class="active" aria-label="Resources"><svg class="i16" viewBox="0 0 16 16"><path d="M11.500 1.500h2V7h-2z" fill="#c33a20"/><path d="M3 8v7.300h10V8L8 3.500z" fill="#fff3b8" stroke="#8a5a10"/><path d="m.7 9 7.300-7 7.300 7" fill="none" stroke="#c88c10" stroke-width="2"/><path d="M6.500 9.500h3v6h-3z" fill="#f2b820" stroke="#8a5a10"/></svg></button>
                                <button aria-label="Design library"><svg class="i16" viewBox="0 0 16 16"><path d="m.7 8 2 2 3-2v7.300h-5z" fill="#22a428" stroke="#0a480c"/><path d="m5.700 5 2 2 3-2v10.300h-5z" fill="#f4cf2a" stroke="#5a4800"/><path d="m10.700 1 2 2 2.600-2v14.300h-4.600z" fill="#5a92e4" stroke="#163a80"/></svg></button>
                                <button aria-label="File explorer"><svg class="i16" viewBox="0 0 16 16"><path d="M1 14.500V2.500h5l1.500 2H13v3" fill="#f3c13e" stroke="#a06a10"/><path d="m1 14.500 3-7h11.500l-3 7z" fill="url(#gold)" stroke="#a06a10"/></svg></button>
                                <button aria-label="View palette"><svg class="i16" viewBox="0 0 16 16"><path d="M.7.7h14.600v9H.7z" fill="#fff" stroke="#223a78"/><path d="M2 3h5M9 3h5M2 7h5M9 7h5" stroke="#d8b400" stroke-width="2"/><path d="M8 1v8M1 5h14" stroke="#223a78"/><path d="M1 13.500h8m-3-2.500 3 2.500L6 16" fill="none" stroke="#1818d0" stroke-width="1.700"/></svg></button>
                                <button aria-label="Appearances"><svg class="i16"><use href="#i-ball"/></svg></button>
                                <button aria-label="Custom properties"><svg class="i16"><use href="#i-hand"/></svg></button>
                            </nav>
                        </main>
                    </div>

                    <footer class="model-tabs">
                        <div class="pager"><button aria-label="First"><svg viewBox="0 0 10 10"><path d="M2 0v10M9 0 4 5l5 5z"/></svg></button><button aria-label="Previous"><svg viewBox="0 0 10 10"><path d="M7 0 2 5l5 5z"/></svg></button><button aria-label="Next"><svg viewBox="0 0 10 10"><path d="m3 0 5 5-5 5z"/></svg></button><button aria-label="Last"><svg viewBox="0 0 10 10"><path d="M8 0v10M1 0l5 5-5 5z"/></svg></button></div>
                        <button class="sheet active">Model</button><button class="sheet">Motion Study 1</button>
                    </footer>
                </div>
            </div>
        </div>

        <div class="statusbar">
            <span class="edition">SolidWorks Premium 2014 x64 Edition</span>
            <span class="mode">Editing Part</span>
            <span class="units">MMGS</span>
            <i class="drop up"></i>
            <button class="icon-btn" aria-label="Quick tips"><svg width="14" height="14" viewBox="0 0 14 14"><path d="M.7.7h12.600v12.600H.7z" fill="#f6fbff" stroke="#335a88" stroke-width="1.400"/><path d="M4.500 5Q4.500 3 7 3t2.500 2Q9.500 6.500 7 7v1.500M7 10v1.500" fill="none" stroke="#1c9c24" stroke-width="2"/></svg></button>
            <button class="icon-btn tag" aria-label="Tags"><svg class="i16" viewBox="0 0 16 16"><path d="M1 10.500 9 1.500h5l1 5-8 9q-6-1-6-5z" fill="#f8c81e" stroke="#8a5800"/><path d="m4 10 3 3m-1.500-4.500 3 3M7 7l3 3" stroke="#a87400"/><circle cx="12" cy="4" r="1.500" fill="#fff" stroke="#8a5800"/></svg></button>
            <svg class="grip" width="9" height="9" viewBox="0 0 9 9" fill="#aeb1b6"><path d="M6 0h2v2H6zM6 3h2v2H6zM6 6h2v2H6zM3 3h2v2H3zM3 6h2v2H3zM0 6h2v2H0z"/></svg>
        </div>
    </div>
</body>
</html>
```
FILE: styles.css
```
:root {
    --frame: #5a8fbf;
    --frame-edge: #48709a;
    --face: #d6d9de;
    --panel: #e2e5ea;
    --tab: #aaacaf;
    --line: #111;
    --text: #14161a;
    --muted: #7e8186;
}

* {
    box-sizing: border-box;
    margin: 0;
    padding: 0;
}

body {
    height: 100vh;
    padding: 7px;
    border: 1px solid var(--frame-edge);
    background: var(--frame);
    color: var(--text);
    font: 12px/13px "Open Sans", "Noto Sans", sans-serif;
    overflow: hidden;
}

button, input {
    border: 0;
    background: none;
    color: inherit;
    font: inherit;
    outline: none;
}

a {
    color: inherit;
    text-decoration: none;
}

svg {
    display: block;
    flex: none;
}

ul {
    list-style: none;
}

.sprites {
    position: absolute;
    width: 0;
    height: 0;
}

.i16 {
    width: 16px;
    height: 16px;
}

.i14 {
    width: 14px;
    height: 14px;
}

.drop {
    flex: none;
    width: 6px;
    height: 4px;
    background: #333;
    clip-path: polygon(0 0, 100% 0, 50% 100%);
}

.drop.off, button:disabled .drop {
    background: #909398;
}

.drop.up {
    clip-path: polygon(50% 0, 100% 100%, 0 100%);
}

.icon-btn {
    display: flex;
    align-items: center;
    justify-content: center;
}

.app {
    display: flex;
    flex-direction: column;
    height: 100%;
    background: var(--face);
}

/* Title bar */
.titlebar {
    display: flex;
    justify-content: space-between;
    height: 29px;
    border-bottom: 1px solid #000;
}

.brand {
    display: flex;
    align-items: center;
    width: 600px;
    height: 28px;
    background: var(--tab);
    border-right: 2px solid #888b90;
}

.logo {
    display: flex;
    align-items: center;
    width: 131px;
    height: 28px;
    padding-left: 4px;
    border-left: 5px solid #dc2a1c;
    background: linear-gradient(#3c434b, #1a1f26);
    color: #fff;
}

.wordmark {
    padding: 5px 0 0 3px;
    font-size: 14px;
    font-style: italic;
}

.menu {
    display: flex;
    gap: 17px;
    margin: 0 11px 0 17px;
    font-size: 11px;
}

.quick {
    display: flex;
    flex: 1;
    align-items: center;
    gap: 8px;
    padding: 0 4px 0 5px;
}

.quick > .drop {
    margin-left: -2px;
}

.select-tool {
    display: flex;
    height: 22px;
    margin: 0 -2px 0 -3px;
    border: 1px solid #7c7f84;
}

.pressed {
    width: 22px;
    background: #b4b7bb;
}

.arrow {
    width: 13px;
    border-left: 1px solid #7c7f84;
}

.doc-name {
    flex: 1;
    white-space: nowrap;
    font-size: 11px;
}

.window-buttons {
    display: flex;
    gap: 9px;
    padding-left: 3px;
}

/* Small toolbar */
.toolstrip {
    height: 30px;
    border-top: 1px solid #f4f6f8;
    border-bottom: 1px solid #999ca0;
}

.tools {
    display: flex;
    align-items: center;
    gap: 7px;
    width: 204px;
    height: 28px;
    padding-left: 16px;
    border-right: 1px solid #a8abaf;
    background: linear-gradient(#555 50%, transparent 50%) 4px 4px / 2px 4px repeat-y;
}

/* Ribbon */
.ribbon {
    display: flex;
    height: 77px;
    padding: 2px 4px 5px;
    border-top: 1px solid #f4f6f8;
    border-bottom: 1px solid #111;
}

.tool {
    display: flex;
    flex-direction: column;
    align-items: center;
    height: 68px;
    padding: 5px 0 5px;
    font-size: 11px;
}

.tool span {
    white-space: nowrap;
}

.tool .drop {
    margin-top: auto;
}

.tool.low {
    padding-top: 12px;
}

.tool:disabled, .line:disabled {
    color: var(--muted);
}

.w40 { width: 40px; }
.w44 { width: 44px; }
.w48 { width: 48px; }
.w60 { width: 60px; }
.w80 { width: 80px; }

.entity-grid {
    display: grid;
    grid-template-columns: 24px 12px 24px 12px 24px 12px 17px;
    grid-auto-rows: 23px;
    align-items: center;
    margin-left: 3px;
    padding-left: 5px;
    border-left: 1px solid #55585c;
    height: 68px;
}

.group {
    display: flex;
    gap: 1px;
    margin-left: 3px;
    padding-left: 2px;
    border-left: 1px solid #55585c;
    height: 68px;
}

.stack {
    display: grid;
    grid-auto-rows: 23px;
    width: 165px;
    padding-left: 2px;
}

.line {
    display: flex;
    align-items: center;
    gap: 7px;
    font-size: 11px;
    white-space: nowrap;
}

.line .drop {
    margin-left: auto;
}

/* Work area */
.workspace {
    display: flex;
    flex: 1;
    flex-direction: column;
    min-height: 0;
    background:
        radial-gradient(ellipse 70% 38% at 105% 100%, #eff0f6, transparent),
        linear-gradient(transparent 50%, #fff 65%),
        radial-gradient(ellipse 24% 60% at 104% 5%, #f2f3f8, transparent),
        radial-gradient(ellipse 75% 62% at 20% 0, #fff 52%, transparent),
        #dcdfe9;
}

.tab-row {
    display: flex;
    justify-content: space-between;
}

.command-tabs {
    display: grid;
    grid-template-columns: 61px 55px 61px 60px 66px 98px 93px 129px;
    height: 20px;
}

.command-tabs button {
    padding-bottom: 2px;
    border: solid #111;
    border-width: 1px 1px 2px 0;
    background: var(--tab);
    white-space: nowrap;
    font-size: 11px;
}

.command-tabs .active {
    border-top-color: var(--face);
    background: var(--panel);
    font-weight: bold;
}

.doc-buttons {
    display: flex;
    gap: 9px;
    padding: 7px 11px 0 0;
}

.work-body {
    display: flex;
    flex: 1;
    min-height: 0;
}

.view-bar {
    display: flex;
    flex-direction: column;
    align-items: center;
    gap: 7px;
    width: 28px;
    padding-top: 19px;
    background: linear-gradient(90deg, #555 50%, transparent 50%) 4px 8px / 4px 2px repeat-x, var(--face);
}

.view-bar hr {
    width: 22px;
    border: 0;
    border-top: 1px solid #85888d;
}

.view-bar .full {
    width: 28px;
    margin-top: 2px;
}

.document {
    display: flex;
    flex: 1;
    flex-direction: column;
    min-width: 0;
}

.upper {
    display: flex;
    flex: 1;
    min-height: 0;
}

.feature-panel {
    display: flex;
    flex: none;
    flex-direction: column;
    width: 206px;
    padding: 8px 1px 3px 0;
    border-right: 2px solid #1a1a1a;
    background: var(--panel);
}

.panel-tabs {
    display: flex;
    margin-right: -1px;
    padding-left: 1px;
    height: 22px;
    border-bottom: 1px solid #111;
}

.panel-tabs button {
    display: flex;
    align-items: center;
    justify-content: center;
    width: 28px;
    height: 21px;
    border: solid #111;
    border-width: 1px 2px 0 0;
    background: var(--tab);
}

.panel-tabs .active {
    height: 22px;
    border-color: #fff #111 #fff #fff;
    background: var(--panel);
}

.panel-tabs .more {
    border: 0;
    margin-left: auto;
    width: 20px;
    background: none;
    font-size: 18px;
}

.filter {
    display: flex;
    align-items: center;
    height: 18px;
    margin: 1px 0 3px 1px;
    padding-left: 7px;
    border: 1px solid #444;
    background: #f0f0f0;
}

.filter input {
    flex: 1;
    min-width: 0;
}

.tree {
    flex: 1;
    min-height: 0;
    overflow: hidden;
    white-space: nowrap;
}

.node {
    display: flex;
    align-items: center;
    height: 18px;
    color: #000;
}

.node > span:last-child {
    margin-left: 5px;
}

.node.root {
    padding-left: 2px;
}

.node.root > span:last-child {
    margin-left: 4px;
    font-size: 11px;
}

.node.off {
    color: var(--muted);
}

.dark {
    color: #333;
}

.twig {
    display: flex;
    flex: none;
    align-items: center;
    width: 21px;
    height: 18px;
    padding-left: 6px;
    background:
        repeating-linear-gradient(#777 0 1px, transparent 1px 2px) 10px 0 / 1px 18px no-repeat,
        repeating-linear-gradient(90deg, #777 0 1px, transparent 1px 2px) 10px 9px / 10px 1px no-repeat;
}

.twig.pass {
    width: 19px;
    background-size: 1px 18px, 0 0;
}

.twig.end {
    background-size: 1px 10px, 10px 1px;
}

.twig button {
    width: 9px;
    height: 9px;
    border: 1px solid #8c8f94;
    background: #fff;
    color: #24428c;
    font-size: 10px;
    line-height: 7px;
}

.rollback {
    height: 3px;
    background: #0a78f0;
}

.scrollbar {
    display: flex;
    height: 17px;
    background: #f0f0f0;
}

.scrollbar button {
    display: flex;
    align-items: center;
    justify-content: center;
    width: 15px;
}

.track {
    flex: 1;
    padding: 1px 0;
}

.thumb {
    width: 60%;
    height: 15px;
    background: #cdcdcd;
}

.viewport {
    position: relative;
    flex: 1;
    min-width: 0;
}

.model {
    position: absolute;
    inset: 0;
    width: 100%;
    height: 100%;
}

.splitter {
    position: absolute;
    top: 268px;
    left: -2px;
    display: flex;
    flex-direction: column;
    align-items: center;
    justify-content: space-evenly;
    width: 9px;
    height: 39px;
    border: 1px solid #111;
    border-left: 0;
    background: #e8eaee;
}

.splitter i {
    width: 3px;
    height: 5px;
    background: #333;
    clip-path: polygon(100% 0, 100% 100%, 0 50%);
}

.hud {
    position: relative;
    display: flex;
    align-items: center;
    justify-content: center;
    gap: 7px;
    padding: 7px 8px 0 0;
}

.task-pane {
    position: absolute;
    top: 39px;
    right: 0;
    border: solid #111;
    border-width: 1px 0 0 1px;
}

.task-pane button {
    display: flex;
    align-items: center;
    justify-content: center;
    width: 23px;
    height: 24px;
    border-bottom: 2px solid #111;
    background: var(--tab);
}

.task-pane .active {
    background: #eceef2;
}

/* Bottom bars */
.model-tabs {
    display: flex;
    height: 15px;
    border-top: 1px solid #111;
    background: var(--panel);
}

.pager {
    display: flex;
    gap: 1px;
    width: 68px;
    padding-left: 2px;
}

.pager button {
    width: 15px;
    padding: 3px 2px;
    background: var(--tab);
}

.pager svg {
    width: 10px;
    height: 8px;
    fill: #8c8f94;
    stroke: #8c8f94;
}

.sheet {
    width: 105px;
    border-right: 2px solid #111;
    border-bottom: 1px solid #111;
    background: var(--tab);
}

.sheet.active {
    width: 57px;
    border-left: 1px solid #111;
    background: var(--panel);
    font-weight: bold;
}

.statusbar {
    display: flex;
    align-items: center;
    height: 19px;
    padding: 0 2px;
    border-top: 1px solid #111;
    font-size: 11px;
}

.mode {
    width: 115px;
    margin-left: auto;
}

.units {
    width: 54px;
}

.statusbar .icon-btn {
    margin-left: 17px;
}

.statusbar .tag {
    margin-left: 49px;
}

.grip {
    align-self: flex-end;
    margin-left: 14px;
}
```
